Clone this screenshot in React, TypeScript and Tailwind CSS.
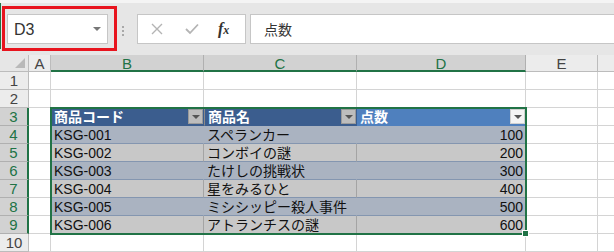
import React from 'react';

const font = { fontFamily: '"Liberation Sans", "Noto Sans CJK JP", sans-serif' };
const cjk = { fontFamily: '"Noto Sans CJK JP", sans-serif' };

const colW = ['w-[29px]', 'w-[22px]', 'w-[153px]', 'w-[153px]', 'w-[169px]', 'w-[72px]', 'flex-1'];

const data = [
  ['KSG-001', 'スペランカー', '100'],
  ['KSG-002', 'コンボイの謎', '200'],
  ['KSG-003', 'たけしの挑戦状', '300'],
  ['KSG-004', '星をみるひと', '400'],
  ['KSG-005', 'ミシシッピー殺人事件', '500'],
  ['KSG-006', 'アトランチスの謎', '600'],
];

function Dd({ light }: { light?: boolean }) {
  return (
    <div
      className={`absolute right-[1px] top-[1px] w-[15px] h-[15px] flex items-center justify-center border ${
        light ? 'bg-[#f4f4f4] border-[#d0d0d0]' : 'bg-[#bdbdbd] border-[#9a9a9a]'
      }`}
    >
      <div className="w-0 h-0 border-l-[4px] border-r-[4px] border-t-[4px] border-l-transparent border-r-transparent border-t-[#555]" />
    </div>
  );
}

export default function App() {
  return (
    <div className="w-[614px] h-[252px] overflow-hidden bg-white text-[#222]" style={font}>
      {/* toolbar */}
      <div className="h-[55px] bg-[#e6e6e6] border-t-[3px] border-[#f4f4f4] flex items-start relative">
        <div className="absolute left-0 top-0 h-[46px] w-[1px] bg-[#217346]" />
        <div className="ml-[2px] mt-[3px] w-[115px] h-[45px] border-[3px] border-[#e8141e] pl-[2px] pt-[5px]">
          <div className="w-[101px] h-[30px] bg-white border border-[#c6c6c6] flex items-center justify-between pl-[6px] pr-[6px]">
            <span className="text-[16px] text-[#333] mt-[2px]">D3</span>
            <div className="w-0 h-0 border-l-[4px] border-r-[4px] border-t-[4px] border-l-transparent border-r-transparent border-t-[#777]" />
          </div>
        </div>
        <div className="ml-[5px] mt-[23px] flex flex-col gap-[2px]">
          <div className="w-[2px] h-[2px] bg-[#a8a8a8]" />
          <div className="w-[2px] h-[2px] bg-[#a8a8a8]" />
          <div className="w-[2px] h-[2px] bg-[#a8a8a8]" />
        </div>
        <div className="ml-[13px] mt-[11px] w-[109px] h-[30px] bg-white border border-[#c6c6c6] flex items-center">
          <svg width="12" height="12" viewBox="0 0 12 12" className="ml-[13px]">
            <path d="M1 1 L11 11 M11 1 L1 11" stroke="#b4b4b4" strokeWidth="1.4" />
          </svg>
          <svg width="14" height="12" viewBox="0 0 14 12" className="ml-[22px]">
            <path d="M1 6 L5 10 L13 1.5" stroke="#b4b4b4" strokeWidth="1.8" fill="none" />
          </svg>
          <span className="ml-[19px] text-[16px] text-[#333] italic font-bold leading-none" style={{ fontFamily: '"Liberation Serif", serif' }}>
            f<span className="text-[12px]">x</span>
          </span>
        </div>
        <div className="ml-[4px] mt-[11px] flex-1 h-[30px] bg-white border-y border-l border-[#c6c6c6] flex items-center pl-[13px]">
          <span className="text-[14px] text-[#333]" style={cjk}>点数</span>
        </div>
      </div>

      {/* grid */}
      <div className="relative">
        {/* column header */}
        <div className="flex h-[17px] text-[15px] leading-[17px]">
          <div className={`${colW[0]} bg-[#e6e6e6] border-r border-b border-[#bcbcbc] relative`}>
            <svg className="absolute right-[3px] bottom-[3px]" width="10" height="10" viewBox="0 0 10 10">
              <path d="M10 0 L10 10 L0 10 Z" fill="#b9b9b9" />
            </svg>
          </div>
          <div className={`${colW[1]} bg-[#ececec] border-r border-b border-[#bcbcbc] text-center text-[#444]`}>A</div>
          {['B', 'C', 'D'].map((c) => (
            <div
              key={c}
              className={`${c === 'B' ? colW[2] : c === 'C' ? colW[3] : colW[4]} bg-[#d2d2d2] border-r border-[#b0b0b0] border-b-2 border-b-[#217346] text-center text-[#217346]`}
            >
              {c}
            </div>
          ))}
          <div className={`${colW[5]} bg-[#ececec] border-r border-b border-[#bcbcbc] text-center text-[#444]`}>E</div>
          <div className={`${colW[6]} bg-[#ececec] border-b border-[#bcbcbc]`} />
        </div>

        {/* rows */}
        {Array.from({ length: 10 }).map((_, i) => {
          const r = i + 1;
          const sel = r >= 3 && r <= 9;
          const dataIdx = r - 4;
          const isHeader = r === 3;
          const isData = r >= 4 && r <= 9;
          const band = isData && dataIdx % 2 === 0;
          const bg = isData ? (band ? 'bg-[#aab3c1]' : 'bg-[#c8c8c8]') : '';
          return (
            <div key={r} className="flex h-[18px] text-[14px] leading-[18px]">
              <div
                className={`${colW[0]} border-b text-[15px] ${
                  sel
                    ? 'bg-[#d2d2d2] border-b-[#b0b0b0] border-r-2 border-r-[#217346] text-[#217346]'
                    : 'bg-[#ececec] border-b-[#bcbcbc] border-r border-r-[#bcbcbc] text-[#444]'
                } text-center`}
              >
                {r}
              </div>
              <div className={`${colW[1]} border-r border-b border-[#d4d4d4]`} />
              {isHeader ? (
                <>
                  <div className={`${colW[2]} bg-[#3b5d8e] relative text-white font-bold pl-[3px] border-b border-[#3b5d8e] overflow-hidden leading-[17px]`} style={cjk}>
                    商品コード
                    <Dd />
                  </div>
                  <div className={`${colW[3]} bg-[#3b5d8e] relative text-white font-bold pl-[3px] border-b border-[#3b5d8e] border-l border-l-[#8a8a8a] overflow-hidden leading-[17px]`} style={cjk}>
                    商品名
                    <Dd />
                  </div>
                  <div className={`${colW[4]} bg-[#4f80be] relative text-white font-bold pl-[3px] border-b border-[#4f80be] overflow-hidden leading-[17px]`} style={cjk}>
                    点数
                    <Dd light />
                  </div>
                </>
              ) : isData ? (
                <>
                  <div className={`${colW[2]} ${bg} border-b border-b-[#8496b0] border-r ${band ? 'border-r-[#aab3c1]' : 'border-r-[#a4a4a4]'} pl-[3px] leading-[18px] text-[#111] whitespace-nowrap overflow-hidden`}>
                    {data[dataIdx][0]}
                  </div>
                  <div className={`${colW[3]} ${bg} border-b border-b-[#8496b0] border-r ${band ? 'border-r-[#aab3c1]' : 'border-r-[#a4a4a4]'} pl-[3px] leading-[17px] text-[#111] whitespace-nowrap overflow-hidden`} style={cjk}>
                    {data[dataIdx][1]}
                  </div>
                  <div className={`${colW[4]} ${bg} border-b border-b-[#8496b0] pr-[3px] leading-[18px] text-right text-[#111] overflow-hidden`}>
                    {data[dataIdx][2]}
                  </div>
                </>
              ) : (
                <>
                  <div className={`${colW[2]} border-r border-b border-[#d4d4d4]`} />
                  <div className={`${colW[3]} border-r border-b border-[#d4d4d4]`} />
                  <div className={`${colW[4]} border-r border-b border-[#d4d4d4]`} />
                </>
              )}
              <div className={`${colW[5]} border-r border-b border-[#d4d4d4]`} />
              <div className={`${colW[6]} border-b border-[#d4d4d4]`} />
            </div>
          );
        })}

        {/* selection border */}
        <div className="absolute left-[50px] top-[52px] w-[477px] h-[128px] border-2 border-[#217346] pointer-events-none" />
        <div className="absolute left-[522px] top-[175px] w-[7px] h-[7px] bg-[#217346] border border-white" />
      </div>
    </div>
  );
}
